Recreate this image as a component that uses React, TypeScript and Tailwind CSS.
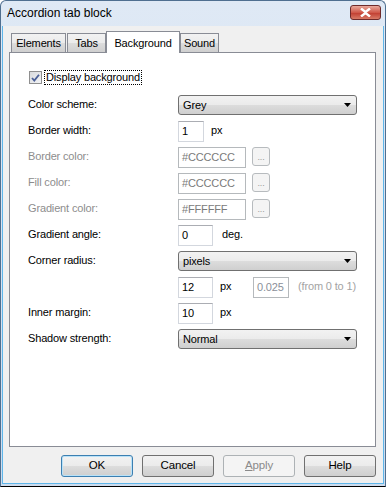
const font = "font-['Liberation_Sans',Arial,sans-serif]";
const grad = "bg-[linear-gradient(#f2f2f2_0%,#ebebeb_50%,#dddddd_50%,#cfcfcf_100%)]";

function Dropdown({ value }: { value: string }) {
  return (
    <div className={`flex h-[20px] w-[179px] items-center justify-between rounded-[3px] border border-[#707070] ${grad} pl-[4px] pr-[5px]`}>
      <span className="leading-[13px]">{value}</span>
      <svg width="7" height="4" viewBox="0 0 7 4">
        <path d="M0 0h7L3.5 4z" fill="#000" />
      </svg>
    </div>
  );
}

function Field({ value, w, disabled }: { value: string; w: string; disabled?: boolean }) {
  return (
    <div
      className={`flex h-[21px] ${w} items-center border bg-white pl-[3px] leading-[13px] ${
        disabled ? "border-[#b5b9bc] text-[#7a7a7a]" : "border-[#d3d7de] border-t-[#abadb3] text-black"
      }`}
    >
      {value}
    </div>
  );
}

function Dots() {
  return (
    <div className="ml-[6px] flex h-[19px] w-[18px] items-end justify-center rounded-[3px] border border-[#b7bbbe] bg-[#f4f4f4] pb-[3px] text-[9px] leading-[9px] text-[#9a9a9a]">
      ...
    </div>
  );
}

function Row({ label, dim, children }: { label?: string; dim?: boolean; children: React.ReactNode }) {
  return (
    <div className="flex h-[26px] items-start">
      <div className={`w-[150px] pt-[2px] leading-[14px] ${dim ? "text-[#8d8d8d]" : "text-black"}`}>{label}</div>
      <div className="flex items-start">{children}</div>
    </div>
  );
}

function Unit({ text, ml }: { text: string; ml: string }) {
  return <span className={`${ml} pt-[2px] leading-[14px]`}>{text}</span>;
}

function Btn({ label, kind }: { label: React.ReactNode; kind?: "default" | "disabled" }) {
  const look =
    kind === "disabled"
      ? "border-[#adb2b5] bg-[#f4f4f4] text-[#8a8a8a]"
      : kind === "default"
      ? `border-[#3c7fb1] ${grad} shadow-[inset_0_0_0_1px_#b9e2f8]`
      : `border-[#707070] ${grad}`;
  return (
    <div className={`flex h-[22px] w-[72px] items-center justify-center rounded-[3px] border text-[11.5px] ${look}`}>
      {label}
    </div>
  );
}

export default function App() {
  return (
    <div className={`flex h-[487px] w-[386px] flex-col rounded-t-[6px] border border-[#4f6f90] border-b-black bg-[linear-gradient(#dfe9f5,#cddcee)] text-[11px] tracking-[-0.15px] text-black ${font}`}>
      {/* title bar */}
      <div className="flex h-[25px] items-start justify-between pl-[6px] pr-[4px]">
        <span className="pt-[5px] text-[12px] leading-[15px] tracking-normal">Accordion tab block</span>
        <div className="mt-[4px] flex h-[15px] w-[31px] items-center justify-center rounded-[3px] border border-[#6e2a2a] bg-[linear-gradient(#e9a99c,#d0594a_50%,#c24033_55%,#d97a66)]">
          <svg width="11" height="9" viewBox="0 0 11 9">
            <path d="M1 0.5l4.5 3.5 4.5-3.5M1 8.5l4.5-3.5 4.5 3.5" stroke="#fff" strokeWidth="2.4" fill="none" />
          </svg>
        </div>
      </div>

      {/* client area */}
      <div className="mx-[1px] mb-[2px] flex flex-1 flex-col border-x-[1px] border-b-[1px] border-[#5fb6ea] bg-[#f0f0f0] pl-[6px] pt-[5px]">
        {/* tabs */}
        <div className="flex h-[21px] items-end pl-[2px]">
          <div className={`mr-[1px] flex h-[19px] w-[55px] items-center justify-center border border-b-0 border-[#898c95] ${grad}`}>
            Elements
          </div>
          <div className={`flex h-[19px] w-[39px] items-center justify-center border border-b-0 border-[#898c95] ${grad}`}>
            Tabs
          </div>
          <div className="relative z-10 -mb-[1px] flex h-[22px] w-[74px] items-start justify-center border border-b-0 border-[#898c95] bg-white pt-[3px]">
            Background
          </div>
          <div className={`flex h-[19px] w-[39px] items-center justify-center border border-b-0 border-[#898c95] ${grad}`}>
            Sound
          </div>
        </div>

        {/* panel */}
        <div className="flex h-[395px] w-[367px] flex-col border border-[#898c95] bg-white pl-[18px]">
          <div className="mt-[17px] flex h-[15px] items-center">
            <div className="ml-[1px] flex h-[13px] w-[13px] items-center justify-center border border-[#8f8f8f] bg-[linear-gradient(135deg,#d8dadd,#f2f3f5)]">
              <svg width="9" height="8" viewBox="0 0 9 8">
                <path d="M1 4l2.3 2.6L8 0.8" stroke="#4a5f97" strokeWidth="1.8" fill="none" />
              </svg>
            </div>
            <span className="ml-[2px] h-[15px] border border-dotted border-black px-[1px] leading-[13px]">
              Display background
            </span>
          </div>

          <div className="mt-[10px] flex flex-col">
            <Row label="Color scheme:">
              <Dropdown value="Grey" />
            </Row>
            <Row label="Border width:">
              <Field value="1" w="w-[26px]" />
              <Unit text="px" ml="ml-[7px]" />
            </Row>
            <Row label="Border color:" dim>
              <Field value="#CCCCCC" w="w-[68px]" disabled />
              <Dots />
            </Row>
            <Row label="Fill color:" dim>
              <Field value="#CCCCCC" w="w-[68px]" disabled />
              <Dots />
            </Row>
            <Row label="Gradient color:" dim>
              <Field value="#FFFFFF" w="w-[68px]" disabled />
              <Dots />
            </Row>
            <Row label="Gradient angle:">
              <Field value="0" w="w-[35px]" />
              <Unit text="deg." ml="ml-[9px]" />
            </Row>
            <Row label="Corner radius:">
              <Dropdown value="pixels" />
            </Row>
            <Row>
              <Field value="12" w="w-[35px]" />
              <span className="ml-[7px] w-[33px] pt-[2px] leading-[14px]">px</span>
              <div className="flex h-[21px] w-[36px] items-center border border-[#b5b9bc] bg-white pl-[3px] text-[#8a8f99]">
                0.025
              </div>
              <span className="ml-[9px] pt-[2px] leading-[14px] text-[#a3a3a3]">(from 0 to 1)</span>
            </Row>
            <Row label="Inner margin:">
              <Field value="10" w="w-[35px]" />
              <Unit text="px" ml="ml-[7px]" />
            </Row>
            <Row label="Shadow strength:">
              <Dropdown value="Normal" />
            </Row>
          </div>
        </div>

        {/* buttons */}
        <div className="mt-[8px] flex justify-end gap-[9px] pr-[7px]">
          <Btn label="OK" kind="default" />
          <Btn label="Cancel" />
          <Btn
            label={
              <span>
                <span className="underline">A</span>pply
              </span>
            }
            kind="disabled"
          />
          <Btn label="Help" />
        </div>
      </div>
    </div>
  );
}
